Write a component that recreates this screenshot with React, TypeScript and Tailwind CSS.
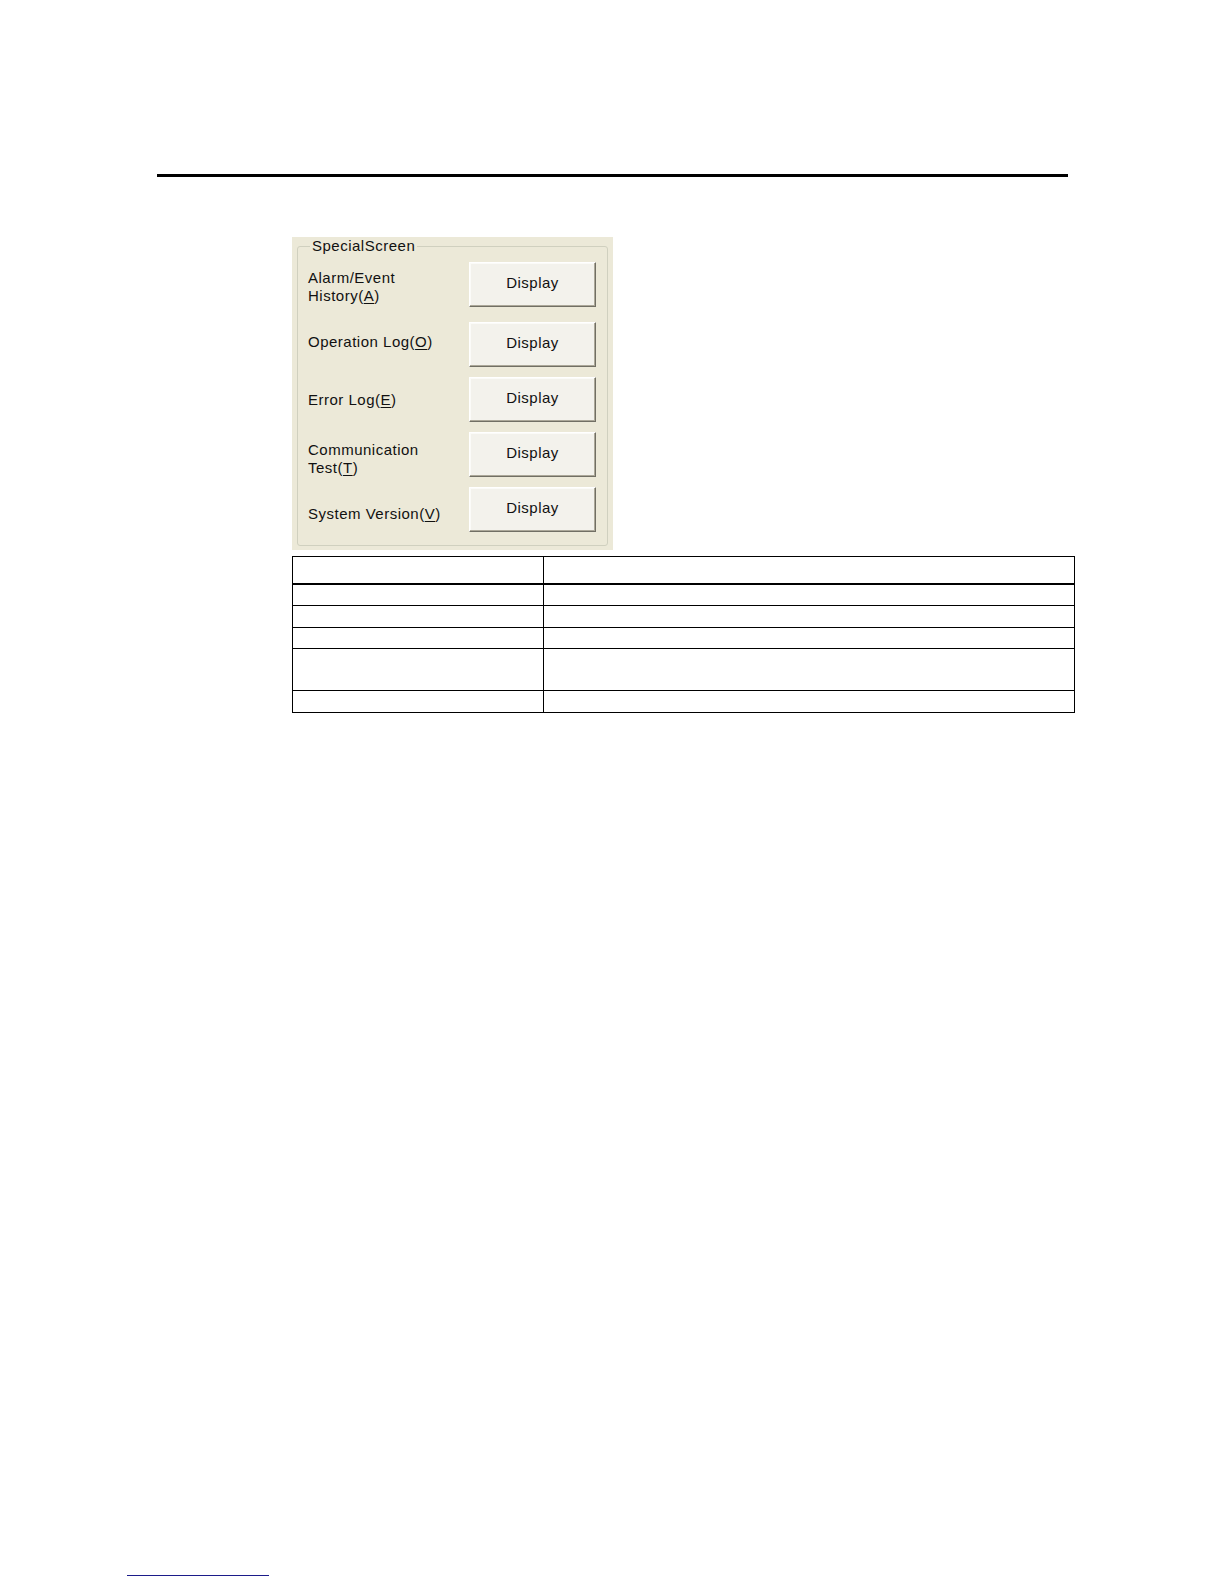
import React from "react";

const font = { fontFamily: '"Liberation Sans", Arial, sans-serif' };

function U({ c }: { c: string }) {
  return <span className="underline underline-offset-[2px] decoration-1">{c}</span>;
}

const rows: { label: React.ReactNode; mt: string; pad: string }[] = [
  {
    label: (
      <>
        Alarm/Event
        <br />
        History(<U c="A" />)
      </>
    ),
    mt: "mt-[7px]",
    pad: "pt-[4px]",
  },
  { label: <>Operation Log(<U c="O" />)</>, mt: "mt-[15px]", pad: "pb-[6px]" },
  { label: <>Error Log(<U c="E" />)</>, mt: "mt-[10px]", pad: "pt-0" },
  {
    label: (
      <>
        Communication
        <br />
        Test(<U c="T" />)
      </>
    ),
    mt: "mt-[10px]",
    pad: "pt-[8px]",
  },
  { label: <>System Version(<U c="V" />)</>, mt: "mt-[10px]", pad: "pt-[8px]" },
];

const tableRows = [
  { h: "h-[26px]", b: "border-b-2" },
  { h: "h-[20px]", b: "border-b" },
  { h: "h-[21px]", b: "border-b" },
  { h: "h-[20px]", b: "border-b" },
  { h: "h-[41px]", b: "border-b" },
  { h: "h-[21px]", b: "" },
];

export default function App() {
  return (
    <div className="w-[1224px] h-[1584px] bg-white flex flex-col text-black" style={font}>
      <div className="mt-[174px] ml-[157px] w-[911px] h-[3px] bg-black" />

      <div className="mt-[60px] ml-[292px] w-[321px] h-[313px] bg-[#ece9d8] px-[5px] pb-[4px]">
        <fieldset className="h-full border border-[#d0d0bf] rounded-[3px] pl-[10px] pr-[11px] pb-[11px]">
          <legend className="ml-[2px] px-[2px] text-[15px] leading-[18px] tracking-[0.5px] text-[#111]">
            SpecialScreen
          </legend>
          {rows.map((r, i) => (
            <div key={i} className={`flex items-center ${r.mt}`}>
              <div className={`w-[161px] ${r.pad} text-[15px] leading-[18px] tracking-[0.5px] text-[#111]`}>
                {r.label}
              </div>
              <button className="w-[127px] h-[45px] bg-[#f3f2ec] border border-t-[#ffffff] border-l-[#ffffff] border-r-[#716f64] border-b-[#716f64] shadow-[inset_-1px_-1px_0_#aca899,inset_1px_1px_0_#fbfbf8] text-[15px] leading-[18px] tracking-[0.5px] text-[#111] flex items-center justify-center pb-[3px]">
                Display
              </button>
            </div>
          ))}
        </fieldset>
      </div>

      <div className="mt-[6px] ml-[292px] w-[783px] border border-black flex flex-col">
        {tableRows.map((r, i) => (
          <div key={i} className={`flex ${r.h} ${r.b} border-black box-content`}>
            <div className="w-[250px] border-r border-black box-content" />
            <div className="flex-1" />
          </div>
        ))}
      </div>

      <div className="mt-[862px] ml-[127px] w-[142px] h-[1px] bg-[#1c1c8a]" />
    </div>
  );
}
